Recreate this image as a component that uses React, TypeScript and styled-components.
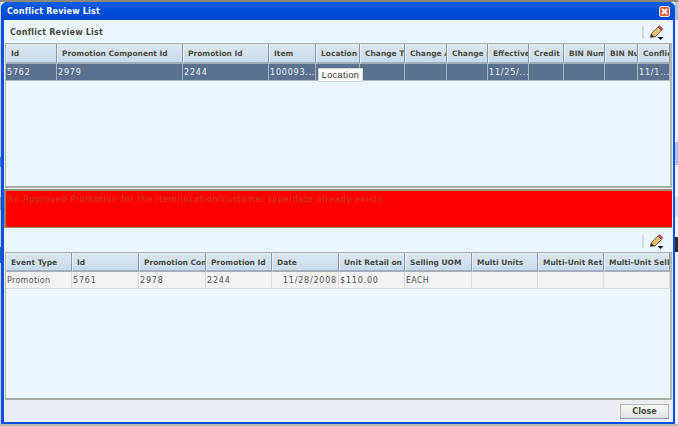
import React from "react";
import styled, { createGlobalStyle } from "styled-components";

const Global = createGlobalStyle`
  html, body { margin: 0; padding: 0; background: #eef3f7; }
  #root { width: 678px; height: 426px; overflow: hidden; }
`;

const Page = styled.div`
  width: 678px;
  height: 426px;
  padding: 2px 3px 2px 1px;
  box-sizing: border-box;
  position: relative;
  background:
    linear-gradient(
        #a8c4dc 0 20px,
        #eef3f7 20px 142px,
        #a9c6e0 142px 165px,
        #eef3f7 165px 197px,
        #d3e2ef 197px 217px,
        #eef3f7 217px 237px,
        #2a2a2a 237px 252px,
        #eef3f7 252px
      )
      right / 3px 100% no-repeat,
    linear-gradient(
        #c9cfd6 0 157px,
        #4f7fb8 157px 167px,
        #c9cfd6 167px 197px,
        #8d949c 197px 210px,
        #c9cfd6 210px 247px,
        #2d5f9e 247px 263px,
        #c9cfd6 263px
      )
      left / 1px 100% no-repeat,
    #eef3f7;
  box-shadow: inset 0 2px 0 #8e8a78, inset 0 -2px 0 #b9b9b2;
`;

const Win = styled.div`
  height: 100%;
  box-sizing: border-box;
  display: flex;
  flex-direction: column;
  background: #0b4fe6;
  border-radius: 6px 6px 0 0;
  padding: 0 2px 2px 3px;
`;

const TitleBar = styled.div`
  height: 18px;
  flex: none;
  margin: 0 -2px 0 -3px;
  padding: 1px 5px 0 6px;
  box-sizing: border-box;
  border-radius: 6px 6px 0 0;
  display: flex;
  align-items: center;
  justify-content: space-between;
  background: linear-gradient(#0a5fe8, #0250dc 40%, #0246d4);
  color: #fff;
  font: bold 8px "DejaVu Sans", Verdana, sans-serif;
  letter-spacing: 0.2px;
`;

const CloseBox = styled.div`
  width: 11px;
  height: 11px;
  box-sizing: border-box;
  border: 1px solid #f4e6e0;
  border-radius: 2px;
  background: #e2603f;
  display: flex;
  align-items: center;
  justify-content: center;
`;

const Body = styled.div`
  flex: 1;
  min-height: 0;
  display: flex;
  flex-direction: column;
  background: #eaeef4;
`;

const Panel = styled.section<{ $h: number }>`
  height: ${(p) => p.$h}px;
  flex: none;
  margin: 0 1px;
  background: #ebf5fe;
  display: flex;
  flex-direction: column;
`;

const Toolbar = styled.div<{ $h: number; $pad: number }>`
  height: ${(p) => p.$h}px;
  flex: none;
  display: flex;
  align-items: center;
  padding: ${(p) => p.$pad}px 8px 0 5px;
  box-sizing: border-box;
  font: bold 8px "DejaVu Sans", Verdana, sans-serif;
  letter-spacing: 0.2px;
  color: #4a4a3a;
`;

const ToolIcons = styled.div`
  display: flex;
  align-items: center;
  gap: 5px;
  margin-left: auto;
`;

const Sep = styled.div`
  width: 2px;
  height: 13px;
  background: #d3dbe2;
`;

const Grid = styled.div`
  flex: 1;
  min-height: 0;
  border-top: 1px solid #aeb2a6;
  border-left: 1px solid #b4b8ac;
  border-right: 2px solid #b4b8ac;
  border-bottom: 2px solid #a9ada0;
`;

const Row = styled.div<{ $cols: string }>`
  display: grid;
  grid-template-columns: ${(p) => p.$cols};
`;

const Head = styled.div<{ $h: number }>`
  height: ${(p) => p.$h}px;
  box-sizing: border-box;
  padding: ${(p) => (p.$h < 20 ? 1 : 0)}px 0 0 4px;
  display: flex;
  align-items: center;
  overflow: hidden;
  white-space: nowrap;
  font: bold 7.5px "DejaVu Sans", Verdana, sans-serif;
  color: #4b4b3e;
  background: linear-gradient(#dce7f1, #c8dbec);
  border-left: 1px solid #e6edf3;
  border-right: 1px solid #8d9aa8;
  border-bottom: 2px solid #a3aeb8;
`;

const Cell = styled.div<{ $sel?: boolean; $right?: boolean; $num?: boolean }>`
  height: 17px;
  box-sizing: border-box;
  padding: 0 1px;
  display: flex;
  align-items: center;
  justify-content: ${(p) => (p.$right ? "flex-end" : "flex-start")};
  overflow: hidden;
  white-space: nowrap;
  font: 8px "DejaVu Sans", Verdana, sans-serif;
  letter-spacing: ${(p) => (p.$num ? "0.8px" : "0.3px")};
  color: ${(p) => (p.$sel ? "#f0f2f4" : "#55554c")};
  background: ${(p) => (p.$sel ? "#5b7190" : "#f2f1f3")};
  border-right: 1px solid ${(p) => (p.$sel ? "#a9b4c2" : "#d5dae0")};
  border-bottom: 1px solid ${(p) => (p.$sel ? "#b6bcc2" : "#d5dae0")};
`;

const Banner = styled.div`
  height: 39px;
  flex: none;
  margin: 1px 1px 2px 0;
  box-sizing: border-box;
  padding: 4px 2px 0;
  background: #ff0000;
  border-left: 2px solid #8a8a70;
  border-top: 2px solid #9a8f70;
  border-bottom: 1px solid #9a8f70;
  color: #b84a30;
  font: 8px "DejaVu Sans", Verdana, sans-serif;
  letter-spacing: 0.73px;
  white-space: nowrap;
`;

const Footer = styled.div`
  flex: 1;
  display: flex;
  justify-content: flex-end;
  align-items: center;
  padding: 0 4px 0 0;
`;

const CloseBtn = styled.button`
  width: 49px;
  height: 15px;
  padding: 0;
  border: 1px solid #b4bac0;
  border-bottom-color: #8f969e;
  background: linear-gradient(#f6f6ef, #dfe2e6);
  font: bold 8px "DejaVu Sans", Verdana, sans-serif;
  color: #4a4a40;
`;

const Tip = styled.div`
  position: absolute;
  left: 318px;
  top: 68px;
  width: 45px;
  height: 14px;
  box-sizing: border-box;
  display: flex;
  align-items: center;
  justify-content: center;
  background: #fdfdfa;
  border: 1px solid #d6d8d4;
  font: 9px "Liberation Sans", Arial, sans-serif;
  letter-spacing: 0.45px;
  color: #333;
`;

const Pencil = () => (
  <svg width="15" height="15" viewBox="0 0 15 15">
    <path d="M1.5 12 L2.5 8.5 L9 2 L12.5 5.5 L6 12 Z" fill="#e8bf6c" stroke="#6b5b48" strokeWidth="0.9" />
    <path d="M9 2 L10.5 0.6 L13.8 3.8 L12.5 5.5 Z" fill="#cf4352" stroke="#7a4a50" strokeWidth="0.5" />
    <path d="M1 12.6 L2.3 8.8 L5.6 12 Z" fill="#3d3a38" />
    <path d="M8.5 12 H14.5 L11.5 15 Z" fill="#111" />
  </svg>
);

const X = () => (
  <svg width="9" height="9" viewBox="0 0 9 9">
    <path d="M2 2 L7 7 M7 2 L2 7" stroke="#fff" strokeWidth="1.8" />
  </svg>
);

const topCols = "51px 126px 86px 47px 44px 45px 42px 41px 41px 35px 41px 33px 32px";
const topHead = ["Id", "Promotion Component Id", "Promotion Id", "Item", "Location", "Change Type", "Change Amount", "Change Percent", "Effective Date", "Credit Check", "BIN Number", "BIN Number", "Conflict"];
const topRow = ["5762", "2979", "2244", "100093...", "", "", "", "", "11/25/...", "", "", "", "11/1..."];

const botCols = "66px 67px 67px 66px 67px 66px 67px 66px 66px 66px";
const botHead = ["Event Type", "Id", "Promotion Component", "Promotion Id", "Date", "Unit Retail on Promotion", "Selling UOM", "Multi Units", "Multi-Unit Retail", "Multi-Unit Selling"];
const botRow = ["Promotion", "5761", "2978", "2244", "11/28/2008", "$110.00", "EACH", "", "", ""];

const isNumeric = (c: string) => /^[$\d]/.test(c);

export default function App() {
  return (
    <Page>
      <Global />
      <Win>
        <TitleBar>
          <span>Conflict Review List</span>
          <CloseBox><X /></CloseBox>
        </TitleBar>
        <Body>
          <Panel $h={168}>
            <Toolbar $h={23} $pad={2}>
              <span>Conflict Review List</span>
              <ToolIcons><Sep /><Pencil /></ToolIcons>
            </Toolbar>
            <Grid>
              <Row $cols={topCols}>{topHead.map((h, i) => <Head key={i} $h={20}>{h}</Head>)}</Row>
              <Row $cols={topCols}>{topRow.map((c, i) => <Cell key={i} $sel $num={isNumeric(c)}>{c}</Cell>)}</Row>
            </Grid>
          </Panel>
          <Banner>An Approved Promotion for the item/location/customer type/date already exists.</Banner>
          <Panel $h={170}>
            <Toolbar $h={22} $pad={1}>
              <ToolIcons><Sep /><Pencil /></ToolIcons>
            </Toolbar>
            <Grid>
              <Row $cols={botCols}>{botHead.map((h, i) => <Head key={i} $h={19}>{h}</Head>)}</Row>
              <Row $cols={botCols}>{botRow.map((c, i) => <Cell key={i} $right={i === 4} $num={isNumeric(c)}>{c}</Cell>)}</Row>
            </Grid>
          </Panel>
          <Footer><CloseBtn>Close</CloseBtn></Footer>
        </Body>
      </Win>
      <Tip>Location</Tip>
    </Page>
  );
}
